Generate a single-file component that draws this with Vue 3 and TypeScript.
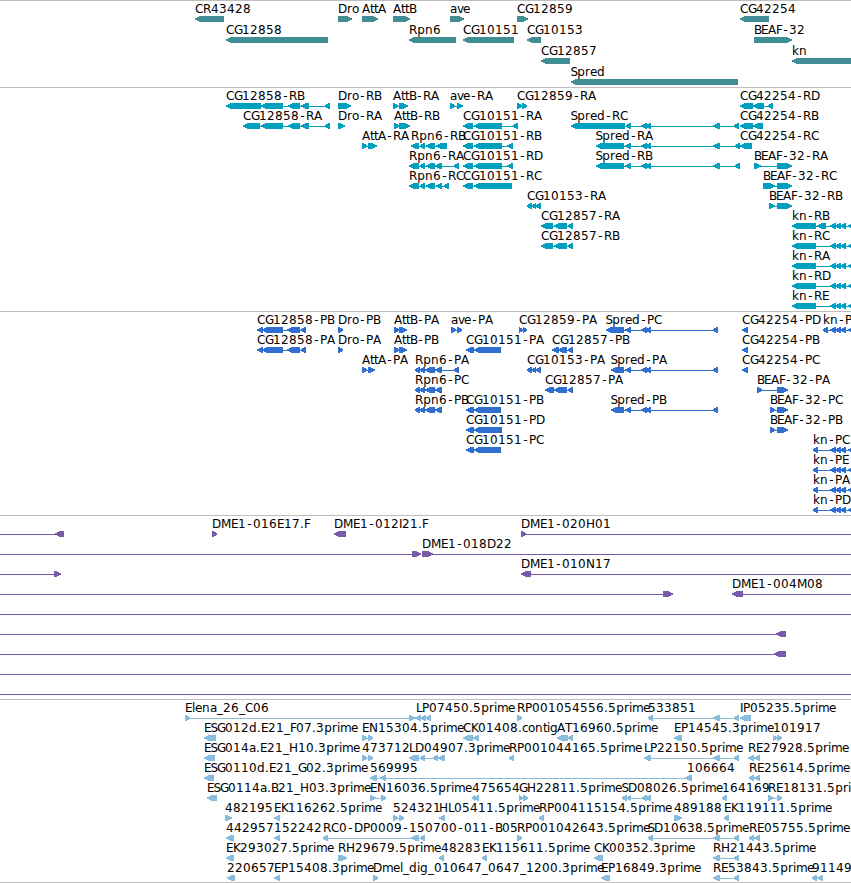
<template>
    <div class="browser">
        <section v-for="track in tracks" :key="track.id" class="track" :class="track.id">
            <svg class="lanes" :width="viewWidth" :height="track.height" :viewBox="`0 0 ${viewWidth} ${track.height}`">
                <g v-for="(lane, row) in track.lanes" :key="row" :transform="`translate(0 ${row * track.pitch})`">
                    <g v-for="(feature, i) in lane" :key="i">
                        <rect class="intron" :x="feature[2][0] + 2" y="18" :width="intronWidth(feature)" height="1" />
                        <polygon v-for="(points, n) in exons(feature)" :key="n" class="exon" :points="points" />
                        <text v-if="feature[0]" class="label" y="12" :x="labelX(feature)">{{ feature[0] }}</text>
                    </g>
                </g>
            </svg>
        </section>
    </div>
</template>

<script setup lang="ts">
type Strand = '<' | '>';
// name, strand, exon start/end pairs, optional label position
type Feature = [string, Strand, number[], number?];

interface Track {
    id: string;
    height: number;
    pitch: number;
    lanes: Feature[][];
}

const viewWidth = 851;

// exons shared by several transcripts
const spred = [641, 647, 646, 651, 713, 720];
const knTail = [830, 836, 836, 841, 841, 846, 848, 854, 866, 870];
const rightPair = [713, 720, 734, 739];

const tracks: Track[] = [
    {
        id: 'gene',
        height: 86,
        pitch: 21,
        lanes: [
            [
                ['CR43428', '<', [195, 224]],
                ['Dro', '>', [338, 352]],
                ['AttA', '>', [362, 378]],
                ['AttB', '>', [393, 410]],
                ['ave', '>', [450, 464]],
                ['CG12859', '>', [517, 528]],
                ['CG42254', '<', [740, 769]],
            ],
            [
                ['CG12858', '<', [226, 328]],
                ['Rpn6', '<', [409, 456]],
                ['CG10151', '<', [463, 514]],
                ['CG10153', '<', [527, 541]],
                ['BEAF-32', '>', [754, 792]],
            ],
            [
                ['CG12857', '<', [541, 570]],
                ['kn', '<', [792, 870]],
            ],
            [['Spred', '<', [571, 738]]],
        ],
    },
    {
        id: 'transcript',
        height: 223,
        pitch: 20,
        lanes: [
            [
                ['CG12858-RB', '<', [226, 261, 261, 283, 288, 300, 301, 309, 325, 330]],
                ['Dro-RB', '>', [338, 351]],
                ['AttB-RA', '>', [393, 398, 399, 408]],
                ['ave-RA', '>', [450, 455, 457, 463]],
                ['CG12859-RA', '>', [517, 522, 522, 527]],
                ['CG42254-RD', '<', [740, 753, 753, 764, 768, 773]],
            ],
            [
                ['CG12858-RA', '<', [243, 260, 261, 283, 288, 300, 301, 309, 325, 330]],
                ['Dro-RA', '>', [338, 345]],
                ['AttB-RB', '>', [394, 399, 399, 410]],
                ['CG10151-RA', '<', [463, 473, 474, 502, 513, 518]],
                ['Spred-RC', '<', [571, 625, 626, 631, ...spred, 734, 739]],
                ['CG42254-RB', '<', [740, 753, 753, 763]],
            ],
            [
                ['AttA-RA', '>', [362, 367, 368, 377]],
                ['Rpn6-RB', '<', [411, 419, 420, 425, 426, 435, 436, 447]],
                ['CG10151-RB', '<', [463, 473, 474, 502, 507, 513]],
                ['Spred-RA', '<', [596, 624, 625, 631, ...spred, 735, 740]],
                ['CG42254-RC', '<', [740, 752]],
            ],
            [
                ['Rpn6-RA', '<', [409, 419, 420, 425, 426, 435, 435, 442, 454, 459]],
                ['CG10151-RD', '<', [463, 473, 474, 502, 507, 513]],
                ['Spred-RB', '<', [596, 624, 625, 631, ...spred, 735, 740]],
                ['BEAF-32-RA', '>', [754, 761, 777, 792]],
            ],
            [
                ['Rpn6-RC', '<', [409, 419, 420, 425, 426, 435, 436, 442, 444, 449]],
                ['CG10151-RC', '<', [463, 473, 474, 512]],
                ['BEAF-32-RC', '>', [763, 775, 777, 792]],
            ],
            [
                ['CG10153-RA', '<', [527, 532, 532, 536, 536, 541]],
                ['BEAF-32-RB', '>', [769, 775, 777, 792]],
            ],
            [
                ['CG12857-RA', '<', [541, 553, 554, 567, 568, 573]],
                ['kn-RB', '<', [792, 816, 817, 826, ...knTail]],
            ],
            [
                ['CG12857-RB', '<', [541, 553, 554, 567, 568, 573]],
                ['kn-RC', '<', [792, 816, ...knTail]],
            ],
            [['kn-RA', '<', [792, 816, ...knTail]]],
            [['kn-RD', '<', [792, 816, ...knTail]]],
            [['kn-RE', '<', [792, 816, ...knTail]]],
        ],
    },
    {
        id: 'protein',
        height: 203,
        pitch: 20,
        lanes: [
            [
                ['CG12858-PB', '<', [257, 263, 262, 283, 287, 300, 301, 306]],
                ['Dro-PB', '>', [338, 343]],
                ['AttB-PA', '>', [394, 399, 399, 407]],
                ['ave-PA', '>', [451, 456, 457, 462]],
                ['CG12859-PA', '>', [519, 523, 523, 527]],
                ['Spred-PC', '<', [606, 624, 625, 631, 641, 647, 646, 651, 713, 718]],
                ['CG42254-PD', '<', [742, 748]],
                ['kn-P', '<', [823, 828, ...knTail]],
            ],
            [
                ['CG12858-PA', '<', [257, 263, 262, 283, 287, 300, 301, 306]],
                ['Dro-PA', '>', [338, 343]],
                ['AttB-PB', '>', [394, 399, 399, 407]],
                ['CG10151-PA', '<', [466, 474, 474, 501]],
                ['CG12857-PB', '<', [552, 559, 558, 567, 568, 573]],
                ['CG42254-PB', '<', [742, 748]],
            ],
            [
                ['AttA-PA', '>', [362, 367, 368, 375]],
                ['Rpn6-PA', '<', [415, 420, 420, 425, 425, 435, 435, 442, 454, 459]],
                ['CG10153-PA', '<', [527, 532, 532, 536, 536, 541]],
                ['Spred-PA', '<', [611, 624, 625, 631, 641, 647, 646, 651, 713, 718]],
                ['CG42254-PC', '<', [742, 748]],
            ],
            [
                ['Rpn6-PC', '<', [415, 420, 420, 425, 425, 435, 435, 442]],
                ['CG12857-PA', '<', [545, 554, 554, 567, 568, 573]],
                ['BEAF-32-PA', '>', [757, 762, 777, 788]],
            ],
            [
                ['Rpn6-PB', '<', [415, 420, 420, 425, 425, 435, 435, 442]],
                ['CG10151-PB', '<', [466, 474, 474, 501]],
                ['Spred-PB', '<', [611, 624, 625, 631, 641, 647, 646, 651, 713, 718]],
                ['BEAF-32-PC', '>', [770, 775, 777, 788]],
            ],
            [
                ['CG10151-PD', '<', [466, 474, 474, 502]],
                ['BEAF-32-PB', '>', [770, 775, 777, 788]],
            ],
            [
                ['CG10151-PC', '<', [466, 474, 474, 501]],
                ['kn-PC', '<', [813, 818, ...knTail]],
            ],
            [['kn-PE', '<', [813, 818, ...knTail]]],
            [['kn-PA', '<', [813, 818, ...knTail]]],
            [['kn-PD', '<', [813, 818, ...knTail]]],
        ],
    },
    {
        id: 'bac',
        height: 183,
        pitch: 20,
        lanes: [
            [
                ['', '<', [-20, -10, 55, 64]],
                ['DME1-016E17.F', '>', [212, 217]],
                ['DME1-012I21.F', '<', [334, 346]],
                ['DME1-020H01', '>', [521, 526, 870, 880]],
            ],
            [
                ['', '>', [-20, -10, 412, 421]],
                ['DME1-018D22', '>', [422, 433, 870, 880]],
            ],
            [
                ['', '>', [-20, -10, 54, 61]],
                ['DME1-010N17', '<', [521, 531, 870, 880]],
            ],
            [
                ['', '>', [-20, -10, 663, 673]],
                ['DME1-004M08', '<', [732, 743, 870, 880]],
            ],
            [['', '>', [-20, -10, 870, 880]]],
            [['', '<', [-20, -10, 776, 786]]],
            [['', '<', [-20, -10, 774, 786]]],
            [['', '>', [-20, -10, 870, 880]]],
            [['', '>', [-20, -10, 870, 880]]],
        ],
    },
    {
        id: 'est',
        height: 182,
        pitch: 20,
        lanes: [
            [
                ['Elena_26_C06', '>', [185, 190, 409, 415]],
                ['LP07450.5prime', '<', [415, 421, 421, 426, 425, 431], 416],
                ['RP001054556.5prime', '>', [517, 522]],
                ['533851', '<', [648, 653, ...rightPair]],
                ['IP05235.5prime', '<', [740, 751]],
            ],
            [
                ['ESG012d.E21_F07.3prime', '<', [204, 216]],
                ['EN15304.5prime', '>', [362, 367, 368, 373]],
                ['CK01408.contig', '<', [463, 473, 473, 479]],
                ['AT16960.5prime', '<', [557, 568, 568, 573]],
                ['EP14545.3prime', '<', [674, 682]],
                ['101917', '>', [773, 777, 777, 782]],
            ],
            [
                ['ESG014a.E21_H10.3prime', '<', [204, 215]],
                ['473712', '>', [362, 367, 368, 373]],
                ['LD04907.3prime', '<', [409, 419, 420, 425, 433, 438, 438, 445]],
                ['RP001044165.5prime', '<', [509, 514]],
                ['LP22150.5prime', '<', [644, 651, ...rightPair]],
                ['RE27928.5prime', '<', [748, 754, 754, 760]],
            ],
            [
                ['ESG0110d.E21_G02.3prime', '<', [204, 214]],
                ['569995', '<', [370, 377, 380, 386, 685, 692]],
                ['106664', '<', [687, 692]],
                ['RE25614.5prime', '<', [749, 754, 754, 760]],
            ],
            [
                ['ESG0114a.B21_H03.3prime', '<', [207, 217]],
                ['EN16036.5prime', '>', [370, 376, 381, 386]],
                ['475654', '<', [472, 475, 474, 479]],
                ['GH22811.5prime', '>', [519, 523, 523, 528]],
                ['SD08026.5prime', '<', [622, 627, 627, 631, 642, 647, 646, 651]],
                ['164169', '<', [722, 727]],
                ['RE18131.5pri', '>', [768, 774, 777, 782]],
            ],
            [
                ['482195', '>', [225, 232]],
                ['EK116262.5prime', '<', [274, 280]],
                ['524321', '>', [393, 398, 399, 404]],
                ['HL05411.5prime', '<', [439, 445]],
                ['RP004115154.5prime', '<', [539, 544]],
                ['489188', '>', [674, 682]],
                ['EK119111.5prime', '<', [724, 729]],
            ],
            [
                ['442957', '<', [226, 234]],
                ['152242', '<', [274, 280]],
                ['RC0-DP0009-150700-011-B05', '<', [323, 328, 411, 419, 420, 425]],
                ['RP001042643.5prime', '>', [517, 522]],
                ['SD10638.5prime', '<', [648, 653, ...rightPair]],
                ['RE05755.5prime', '<', [749, 754, 754, 760]],
            ],
            [
                ['EK293027.5prime', '<', [226, 234]],
                ['RH29679.5prime', '>', [338, 347]],
                ['48283', '<', [439, 444], 441],
                ['EK115611.5prime', '<', [482, 487]],
                ['CK00352.3prime', '<', [594, 603]],
                ['RH21443.5prime', '<', rightPair],
            ],
            [
                ['220657', '<', [227, 235]],
                ['EP15408.3prime', '<', [274, 280]],
                ['Dmel_dig_010647_0647_1200.3prime', '>', [373, 378]],
                ['EP16849.3prime', '<', [601, 610]],
                ['RE53843.5prime', '<', rightPair],
                ['91149', '<', [812, 817, 817, 823]],
            ],
        ],
    },
];

// whole-pixel character advances, anything missing (digits mostly) is 8
const advances: Record<string, number> = {
    B: 7, D: 9, E: 7, F: 6, H: 9, I: 3, K: 7, L: 6, M: 10, N: 9, P: 7, S: 6, T: 7,
    a: 7, c: 6, e: 7, i: 3, k: 7, l: 3, m: 11, o: 7, r: 5, t: 4, v: 6,
    '-': 7, '_': 6, '.': 4,
};

// centres a glyph inside its advance
const nudges: Record<string, number> = { '-': 1.2, S: -0.6, p: 0.3 };

const labelX = ([name, , coords, start]: Feature) => {
    let x = start ?? coords[0];
    return [...name].map(char => {
        const at = x + (nudges[char] ?? 0);
        x += advances[char] ?? 8;
        return at;
    }).join(' ');
};

const intronWidth = ([, , coords]: Feature) => coords[coords.length - 1] - coords[0] - 4;

const exons = ([, strand, coords]: Feature) => {
    const shapes: string[] = [];
    for (let i = 0; i < coords.length; i += 2) {
        const tip = Math.min(6, coords[i + 1] - coords[i]);
        const [from, to, step] = strand === '<' ? [coords[i], coords[i + 1], 1] : [coords[i + 1], coords[i], -1];
        const neck = from + step * tip * 0.85;
        const mid = from + step * tip * 0.35;
        const outline = [[from, 2.4], [mid, 1.3], [neck, 0], [to, 0], [to, 6], [neck, 6], [mid, 4.7], [from, 3.6]];
        shapes.push(outline.map(([x, y]) => `${x},${y + 15}`).join(' '));
    }
    return shapes;
};
</script>

<style>
body {
    margin: 0;
    background: #fff;
}
</style>

<style scoped>
.browser {
    width: 851px;
    height: 883px;
    box-sizing: border-box;
    overflow: hidden;
    border-bottom: 1px solid #bebebe;
}

.track {
    border-top: 1px solid #bebebe;
}

.lanes {
    display: block;
}

.label {
    font-family: "DejaVu Sans", "Noto Sans", sans-serif;
    font-size: 12px;
    fill: #000;
}

.intron,
.exon {
    shape-rendering: crispEdges;
}

.gene {
    fill: #408e94;
}

.transcript {
    fill: #009fbf;
}

.protein {
    fill: #306fcf;
}

.bac {
    fill: #775aa9;
}

.est {
    fill: #87bcde;
}
</style>
